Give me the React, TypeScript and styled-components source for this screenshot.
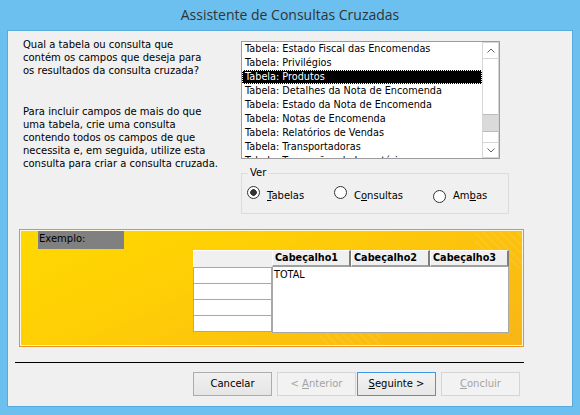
import React from "react";
import styled, { createGlobalStyle, css } from "styled-components";

const FONT = `"DejaVu Sans", "Liberation Sans", sans-serif`;

const GlobalStyle = createGlobalStyle`
  html, body { margin: 0; padding: 0; background: #6bc0f0; }
  body { font-family: ${FONT}; }
  * { box-sizing: border-box; }
`;

const Frame = styled.div`
  width: 580px;
  height: 415px;
  background: #6bc0f0;
  display: flex;
  flex-direction: column;
  padding: 0 7px 8px 7px;
`;

const TitleBar = styled.div`
  height: 30px;
  display: flex;
  align-items: center;
  justify-content: center;
  font-family: "Open Sans", sans-serif;
  font-size: 14px;
  color: #333;
  padding-bottom: 1px;
`;

const Client = styled.div`
  flex: 1;
  background: #f0f0f0;
  border: 1px solid #58a9dc;
  padding: 7px 0 0 11px;
  display: flex;
  flex-direction: column;
  font-size: 10px;
  color: #000;
`;

const TopRow = styled.div`
  display: flex;
`;

const Instructions = styled.div`
  width: 222px;
  padding-left: 4px;
`;

const Para = styled.p<{ $gap?: number }>`
  margin: ${(p) => p.$gap ?? 0}px 0 0 0;
  line-height: 13px;
  font-size: 10px;
`;

const RightCol = styled.div`
  padding-top: 3px;
  display: flex;
  flex-direction: column;
`;

const Listbox = styled.div`
  width: 259px;
  height: 118px;
  border: 1px solid #9c9c9c;
  background: #fff;
  display: flex;
`;

const ListItems = styled.div`
  flex: 1;
  overflow: hidden;
`;

const ListItem = styled.div<{ $selected?: boolean }>`
  height: 14px;
  line-height: 14px;
  padding-left: 3px;
  white-space: nowrap;
  font-size: 9.7px;
  ${(p) =>
    p.$selected &&
    css`
      background: #000;
      color: #fff;
      outline: 1px dotted #fff;
      outline-offset: -1px;
    `}
`;

const ScrollBar = styled.div`
  width: 17px;
  border: 1px solid #d6d6d6;
  display: flex;
  flex-direction: column;
  background: #fff;
`;

const ArrowBtn = styled.div<{ $pos: "up" | "down" }>`
  height: ${(p) => (p.$pos === "up" ? 16 : 15)}px;
  display: flex;
  align-items: center;
  justify-content: center;
  ${(p) =>
    p.$pos === "up"
      ? css`border-bottom: 1px solid #d6d6d6;`
      : css`border-top: 1px solid #d6d6d6;`}
`;

const Track = styled.div`
  flex: 1;
  display: flex;
  flex-direction: column;
`;

const Thumb = styled.div<{ $top: number }>`
  margin-top: ${(p) => p.$top}px;
  height: 18px;
  background: #dadada;
  border-top: 1px solid #bcbcbc;
  border-bottom: 1px solid #bcbcbc;
`;

const GroupBox = styled.div`
  position: relative;
  margin-top: 14px;
  width: 268px;
  height: 41px;
  border: 1px solid #dcdcdc;
  display: flex;
  align-items: flex-start;
  padding: 12px 0 0 5px;
`;

const Legend = styled.span`
  position: absolute;
  top: -8px;
  left: 6px;
  padding: 0 2px;
  background: #f0f0f0;
  line-height: 13px;
  font-size: 10px;
`;

const RadioOption = styled.label<{ $width?: number }>`
  display: flex;
  align-items: flex-start;
  gap: 7px;
  ${(p) => (p.$width ? css`width: ${p.$width}px;` : "")}
  font-size: 10px;
  line-height: 13px;
`;

const RadioCircle = styled.span<{ $checked?: boolean; $drop?: number }>`
  width: 13px;
  height: 13px;
  border-radius: 50%;
  border: 1px solid #333;
  margin-top: ${(p) => p.$drop ?? 0}px;
  flex: none;
  background: ${(p) =>
    p.$checked
      ? "radial-gradient(circle, #333 0 3px, #fff 3.6px)"
      : "#fff"};
`;

const RadioText = styled.span`
  margin-top: 3px;
`;

const ExamplePanel = styled.div`
  margin-top: 15px;
  width: 505px;
  height: 118px;
  border: 1px solid #f0901e;
  box-shadow: inset 0 0 0 1px #fff8e0;
  padding: 1px;
  display: flex;
  flex-direction: column;
  background:
    repeating-linear-gradient(45deg, rgba(255, 255, 255, 0.07) 0 2px, transparent 2px 6px) 455px 2px / 48px 36px no-repeat,
    repeating-linear-gradient(45deg, rgba(255, 255, 255, 0.07) 0 2px, transparent 2px 6px) 300px 104px / 60px 12px no-repeat,
    linear-gradient(155deg, #ffd800 0%, #fecf05 35%, #fcc20d 65%, #f8b516 100%);
`;

const ExampleLabel = styled.div`
  margin-left: 17px;
  width: 86px;
  height: 18px;
  background: #808080;
  padding: 1px 0 0 1px;
  line-height: 13px;
  font-size: 10px;
`;

const Grid = styled.div`
  margin: 1px 0 0 172px;
  display: flex;
  align-items: flex-start;
`;

const RowHeaderCol = styled.div`
  width: 79px;
  display: flex;
  flex-direction: column;
`;

const Corner = styled.div`
  height: 17px;
  background: #f0f0f0;
  border-top: 1px solid #fff;
  border-left: 1px solid #fff;
`;

const RowCell = styled.div<{ $last?: boolean }>`
  height: ${(p) => (p.$last ? 17 : 16)}px;
  background: #fff;
  border: 1px solid #a8a8a8;
  border-bottom-width: ${(p) => (p.$last ? 1 : 0)}px;
`;

const DataCol = styled.div`
  width: 237px;
  display: flex;
  flex-direction: column;
`;

const HeaderRow = styled.div`
  display: flex;
  height: 17px;
`;

const HeaderCell = styled.div`
  width: 79px;
  background: #f0f0f0;
  border-top: 1px solid #fff;
  border-left: 1px solid #fff;
  border-right: 2px solid #7d7d7d;
  border-bottom: 2px solid #a0a0a0;
  font-weight: bold;
  font-size: 9.7px;
  line-height: 13px;
  padding-left: 2px;
  white-space: nowrap;
  overflow: hidden;
`;

const DataBody = styled.div`
  height: 66px;
  background: #fff;
  border: 1px solid #a8a8a8;
  border-top: none;
  padding: 1px 0 0 1px;
  font-size: 9.7px;
  line-height: 13px;
`;

const Separator = styled.div`
  margin: 15px 0 0 -4px;
  width: 509px;
  height: 1px;
  background: #000;
`;

const ButtonRow = styled.div`
  margin-top: 9px;
  padding-left: 174px;
  display: flex;
  gap: 5px;
`;

const NavPair = styled.div`
  display: flex;
  gap: 1px;
`;

const Button = styled.button<{ $variant?: "normal" | "disabled" | "default" }>`
  width: 79px;
  height: 24px;
  margin: 0;
  padding: 0 0 1px 0;
  font-family: ${FONT};
  font-size: 10px;
  color: #000;
  border: 1px solid #acacac;
  border-radius: 0;
  background: linear-gradient(#f0f0f0, #e5e5e5);
  ${(p) =>
    p.$variant === "disabled" &&
    css`
      color: #a3a3a3;
      border-color: #d5d5d5;
      background: #f2f2f2;
    `}
  ${(p) =>
    p.$variant === "default" &&
    css`
      border-color: #3d98e6;
      background: linear-gradient(#f2f2f2, #e7e7e7);
    `}
`;

const Chevron = ({ dir }: { dir: "up" | "down" }) => (
  <svg width="8" height="5" viewBox="0 0 8 5">
    <polyline
      points={dir === "up" ? "0.5,4.5 4,1 7.5,4.5" : "0.5,0.5 4,4 7.5,0.5"}
      fill="none"
      stroke="#606060"
      strokeWidth="1"
    />
  </svg>
);

const items = [
  "Tabela: Estado Fiscal das Encomendas",
  "Tabela: Privilégios",
  "Tabela: Produtos",
  "Tabela: Detalhes da Nota de Encomenda",
  "Tabela: Estado da Nota de Encomenda",
  "Tabela: Notas de Encomenda",
  "Tabela: Relatórios de Vendas",
  "Tabela: Transportadoras",
  "Tabela: Transações de Inventário",
];

export default function App() {
  return (
    <>
      <GlobalStyle />
      <Frame>
        <TitleBar>Assistente de Consultas Cruzadas</TitleBar>
        <Client>
          <TopRow>
            <Instructions>
              <Para>
                Qual a tabela ou consulta que
                <br />
                contém os campos que deseja para
                <br />
                os resultados da consulta cruzada?
              </Para>
              <Para $gap={28}>
                Para incluir campos de mais do que
                <br />
                uma tabela, crie uma consulta
                <br />
                contendo todos os campos de que
                <br />
                necessita e, em seguida, utilize esta
                <br />
                consulta para criar a consulta cruzada.
              </Para>
            </Instructions>
            <RightCol>
              <Listbox>
                <ListItems>
                  {items.map((t, i) => (
                    <ListItem key={i} $selected={i === 2}>
                      {t}
                    </ListItem>
                  ))}
                </ListItems>
                <ScrollBar>
                  <ArrowBtn $pos="up">
                    <Chevron dir="up" />
                  </ArrowBtn>
                  <Track>
                    <Thumb $top={55} />
                  </Track>
                  <ArrowBtn $pos="down">
                    <Chevron dir="down" />
                  </ArrowBtn>
                </ScrollBar>
              </Listbox>
              <GroupBox>
                <Legend>Ver</Legend>
                <RadioOption $width={87}>
                  <RadioCircle $checked />
                  <RadioText>
                    <u>T</u>abelas
                  </RadioText>
                </RadioOption>
                <RadioOption $width={99}>
                  <RadioCircle />
                  <RadioText>
                    C<u>o</u>nsultas
                  </RadioText>
                </RadioOption>
                <RadioOption>
                  <RadioCircle $drop={4} />
                  <RadioText>
                    Am<u>b</u>as
                  </RadioText>
                </RadioOption>
              </GroupBox>
            </RightCol>
          </TopRow>

          <ExamplePanel>
            <ExampleLabel>Exemplo:</ExampleLabel>
            <Grid>
              <RowHeaderCol>
                <Corner />
                <RowCell />
                <RowCell />
                <RowCell />
                <RowCell $last />
              </RowHeaderCol>
              <DataCol>
                <HeaderRow>
                  <HeaderCell>Cabeçalho1</HeaderCell>
                  <HeaderCell>Cabeçalho2</HeaderCell>
                  <HeaderCell>Cabeçalho3</HeaderCell>
                </HeaderRow>
                <DataBody>TOTAL</DataBody>
              </DataCol>
            </Grid>
          </ExamplePanel>

          <Separator />

          <ButtonRow>
            <Button>Cancelar</Button>
            <NavPair>
              <Button $variant="disabled" disabled>
                &lt; <u>A</u>nterior
              </Button>
              <Button $variant="default">
                <u>S</u>eguinte &gt;
              </Button>
            </NavPair>
            <Button $variant="disabled" disabled>
              <u>C</u>oncluir
            </Button>
          </ButtonRow>
        </Client>
      </Frame>
    </>
  );
}
